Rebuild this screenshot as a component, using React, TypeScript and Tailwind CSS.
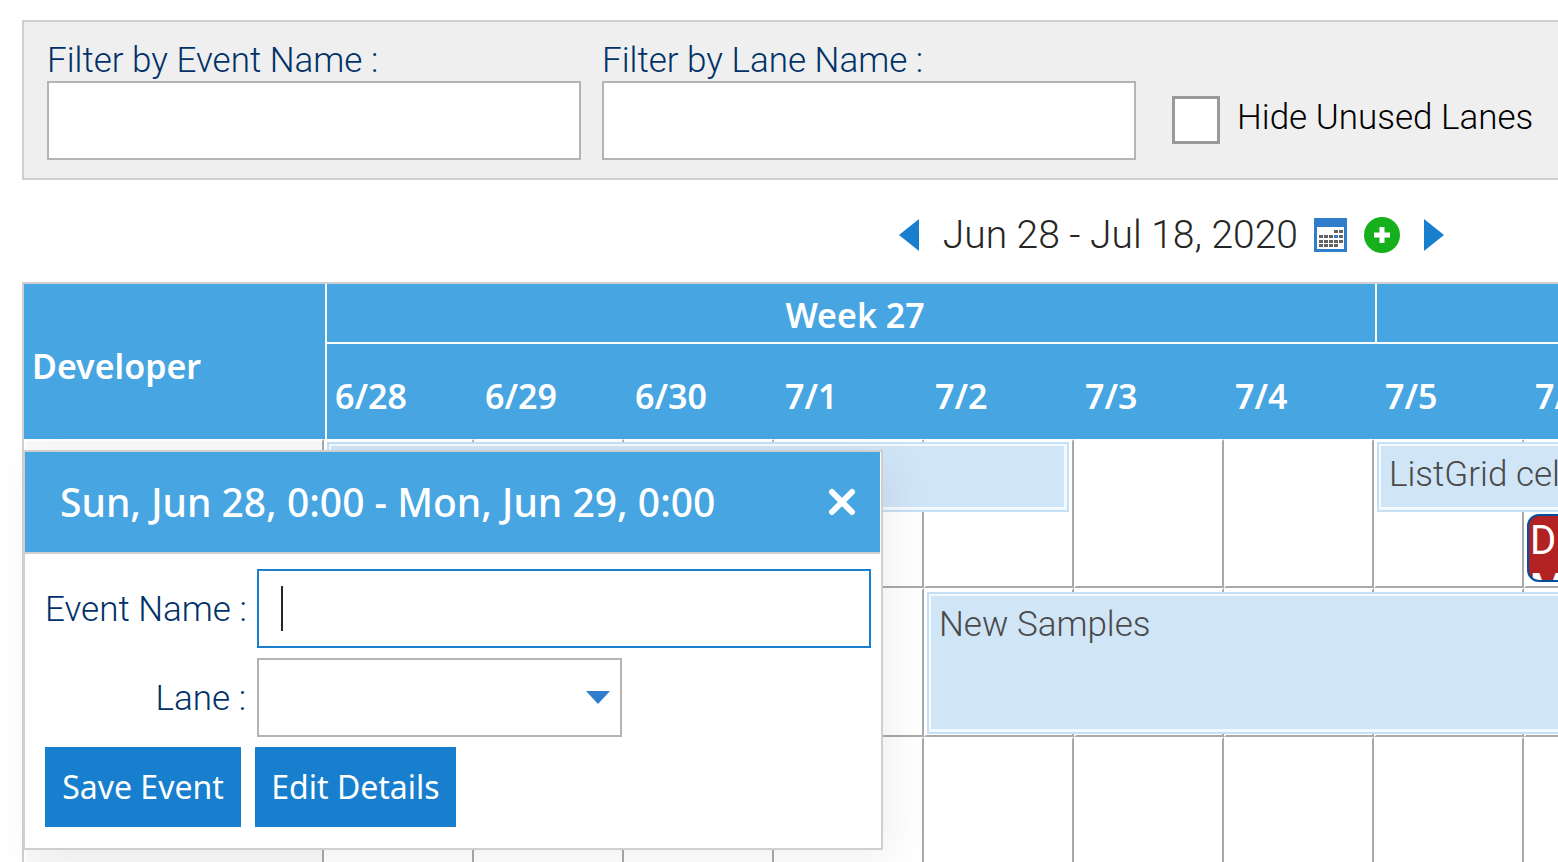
import React, { useState } from 'react';

interface TimelineEvent {
  name: string;
  className: string;
}

const DAYS = ['6/28', '6/29', '6/30', '7/1', '7/2', '7/3', '7/4', '7/5', '7/6'];
const LANES = ['lane-1', 'lane-2', 'lane-3'];

const EVENTS: TimelineEvent[] = [
  { name: '', className: 'left-[303px] top-[3px] w-[742px] h-[70px]' },
  { name: 'ListGrid cell layout', className: 'left-[1353px] top-[3px] w-[742px] h-[70px]' },
  { name: 'New Samples', className: 'left-[903px] top-[153px] w-[892px] h-[142px]' },
];

const label = 'text-[35px] leading-[40px] font-light text-[#003168] whitespace-nowrap';
const textBox = 'block h-[79px] border-2 border-[#b4b4b4] bg-white px-6 text-[35px] outline-none';

// day squares of the calendar icon, one entry per row
const DAY_DOTS = [
  { y: 12, xs: [20, 25] },
  { y: 17, xs: [5, 10, 15, 20, 25] },
  { y: 22, xs: [5, 10, 15, 20, 25] },
  { y: 26, xs: [5, 10, 15, 20] },
];

const CalendarIcon = () => (
  <svg width="33" height="34" viewBox="0 0 33 34" aria-hidden="true">
    <rect width="33" height="34" fill="#2f7dcb" />
    <rect x="3" y="9" width="27" height="22" fill="#fff" />
    {DAY_DOTS.map((row) =>
      row.xs.map((x) => (
        <rect key={`${x}-${row.y}`} x={x} y={row.y} width="4" height="3" fill={row.y === 17 && x === 20 ? '#2f7dcb' : '#636363'} />
      ))
    )}
  </svg>
);

const FilterBar: React.FC = () => {
  const [hideUnused, setHideUnused] = useState(false);

  return (
    <div className="flex shrink-0 border-2 border-r-0 border-[#cfcfcf] bg-[#efefef] pt-[19px] pb-[18px] pl-[23px]">
      <div className="mr-[21px] w-[534px] shrink-0">
        <label htmlFor="eventFilter" className={`block ${label}`}>Filter by Event Name :</label>
        <input id="eventFilter" type="text" className={`w-full ${textBox}`} />
      </div>
      <div className="mr-9 w-[534px] shrink-0">
        <label htmlFor="laneFilter" className={`block ${label}`}>Filter by Lane Name :</label>
        <input id="laneFilter" type="text" className={`w-full ${textBox}`} />
      </div>
      <label className="flex items-center gap-[17px] self-end pb-4 text-[35px] leading-[44px] font-light whitespace-nowrap text-black">
        <input
          type="checkbox"
          checked={hideUnused}
          onChange={(e) => setHideUnused(e.target.checked)}
          className="size-12 appearance-none border-[3px] border-[#9a9a9a] bg-white"
        />
        <span className="pb-1">Hide Unused Lanes</span>
      </label>
    </div>
  );
};

const DateChooser = () => (
  <div className="flex h-[102px] shrink-0 items-center justify-end pt-2 pr-[114px]">
    <button type="button" aria-label="Previous">
      <svg width="20" height="34" viewBox="0 0 20 34"><path d="M20 1v32L0 17z" fill="#177fcd" /></svg>
    </button>
    <span className="ml-6 text-[39px] leading-[44px] font-light whitespace-nowrap text-[#262626]">Jun 28 - Jul 18, 2020</span>
    <button type="button" aria-label="Pick date" className="ml-4"><CalendarIcon /></button>
    <button type="button" aria-label="Add event" className="ml-[17px]">
      <svg width="36" height="36" viewBox="0 0 36 36">
        <circle cx="18" cy="18" r="18" fill="#16b01c" />
        <path d="M18 10v16M10 18h16" stroke="#fff" strokeWidth="5" />
      </svg>
    </button>
    <button type="button" aria-label="Next" className="ml-6">
      <svg width="20" height="34" viewBox="0 0 20 34"><path d="M0 1v32L20 17z" fill="#177fcd" /></svg>
    </button>
  </div>
);

const EventDialog: React.FC = () => (
  <div
    role="dialog"
    className="absolute top-[11px] -left-px w-[860px] border-2 border-[#cfcfcf] bg-white shadow-[10px_10px_40px_rgba(0,0,0,0.06)]"
  >
    <div className="mr-px flex h-[102px] items-center justify-between border-b-2 border-[#cfcfcf] bg-[#47a5e2] pr-6 pl-[35px]">
      <h2 className="font-[Noto_Sans] text-[39px] leading-[52px] font-medium whitespace-nowrap text-white">
        Sun, Jun 28, 0:00 - Mon, Jun 29, 0:00
      </h2>
      <button type="button" aria-label="Close">
        <svg width="28" height="28" viewBox="0 0 28 28">
          <path d="M4 4l20 20M24 4L4 24" stroke="#fff" strokeWidth="6" strokeLinecap="round" />
        </svg>
      </button>
    </div>
    <form className="pt-[15px] pr-[10px] pb-[21px] pl-5">
      <div className="grid grid-cols-[201px_1fr] items-center gap-x-[11px] gap-y-[10px]">
        <label htmlFor="eventName" className={`pt-[2px] text-right ${label}`}>Event Name :</label>
        <div className="relative">
          <input
            id="eventName"
            type="text"
            className="block h-[79px] w-full border-2 border-[#177fcd] bg-white px-[22px] text-[35px] caret-transparent outline-none"
          />
          <span className="pointer-events-none absolute top-[17px] left-6 h-[45px] w-[2px] bg-[#262626]" />
        </div>
        <label htmlFor="lane" className={`pt-[2px] text-right ${label}`}>Lane :</label>
        <div className="relative w-[365px]">
          <select id="lane" className={`w-full appearance-none ${textBox}`}>
            <option value=""></option>
          </select>
          <svg className="pointer-events-none absolute top-[32px] right-3" width="24" height="14" viewBox="0 0 24 14">
            <path d="M0 1h24L12 14z" fill="#2f7dcb" />
          </svg>
        </div>
      </div>
      <div className="mt-[10px] flex gap-[14px] font-[Noto_Sans] text-[32px] leading-[80px] text-white">
        <button type="button" className="w-[196px] bg-[#177fcd] whitespace-nowrap">Save Event</button>
        <button type="button" className="w-[201px] bg-[#177fcd] whitespace-nowrap">Edit Details</button>
      </div>
    </form>
  </div>
);

const Timeline: React.FC = () => (
  <div className="flex grow flex-col border-t-2 border-l-2 border-[#cfcfcf]">
    <div className="flex h-[155px] shrink-0 bg-[#47a5e2] font-[Noto_Sans] text-[34px] leading-[46px] font-semibold text-white">
      <div className="flex w-[303px] shrink-0 items-center border-r-2 border-white pt-2 pl-2">Developer</div>
      <div className="shrink-0">
        <div className="flex h-[60px] border-b-2 border-white">
          <div className="flex w-[1050px] items-center justify-center border-r-2 border-white pt-1 pl-2">Week 27</div>
          <div className="grow" />
        </div>
        <div className="flex h-[95px] items-center pt-2">
          {DAYS.map((day) => (
            <div key={day} className="w-[150px] pl-2">{day}</div>
          ))}
        </div>
      </div>
    </div>

    <div className="relative grow">
      {LANES.map((lane) => (
        <div key={lane} className="flex h-[149px]">
          <div className="w-[300px] shrink-0 border-2 border-t-white border-r-[#a9a9a9] border-b-[#a9a9a9] border-l-white bg-[#f9f9f9]" />
          {DAYS.map((day) => (
            <div
              key={day}
              className="w-[150px] shrink-0 border-2 border-t-white border-r-[#a9a9a9] border-b-[#a9a9a9] border-l-white"
            />
          ))}
        </div>
      ))}

      {EVENTS.map((event) => (
        <div key={event.className} className={`absolute border-2 border-[#c5dff4] bg-[#f2f9ff] pt-[2px] pr-[3px] pb-[3px] pl-[2px] ${event.className}`}>
          <div className="h-full bg-[#d0e5f6] pl-2 text-[35px] leading-[58px] font-light whitespace-nowrap text-[#4a4a4a]">
            {event.name}
          </div>
        </div>
      ))}

      {/* short event, its text runs past the bottom edge */}
      <div className="absolute top-[75px] left-[1503px] h-[68px] w-[142px] overflow-hidden rounded-[12px] border-2 border-[#00509d] bg-[#b22222] pt-px pl-px text-[40px] leading-[48px] text-white">
        DOM
        <br />
        <b className="font-medium">Methods</b>
      </div>

      <EventDialog />
    </div>
  </div>
);

export default function App() {
  return (
    <div className="flex h-screen flex-col overflow-hidden bg-white pt-5 pl-[22px] font-[Roboto,sans-serif]">
      <FilterBar />
      <DateChooser />
      <Timeline />
    </div>
  );
}
